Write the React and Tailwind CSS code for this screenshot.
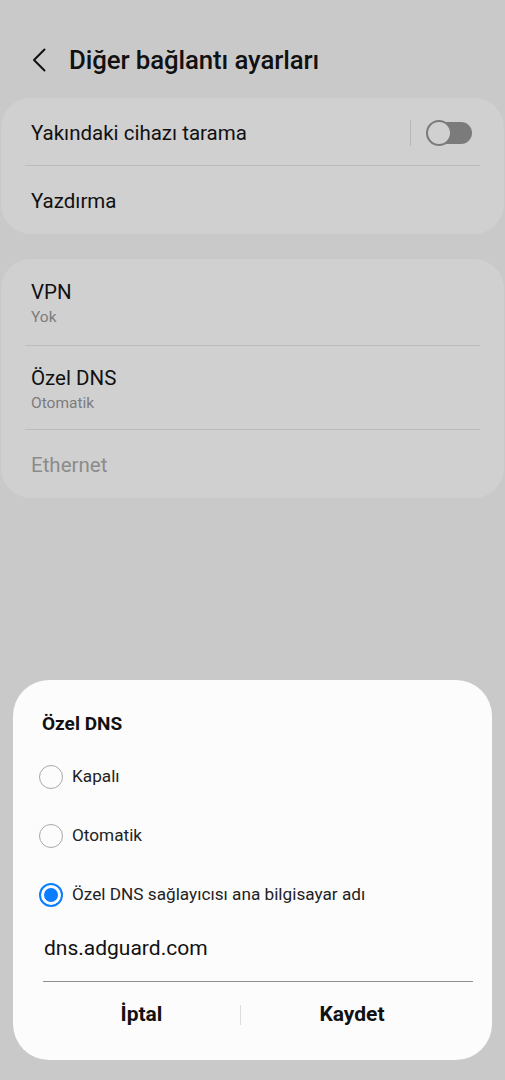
import React, { useState } from 'react';

const font = { fontFamily: 'Roboto, "Noto Sans", sans-serif' };

function Row({ title, sub, muted, children, divider, pad = 'pt-[20px] pb-[16px]' }) {
  return (
    <div className="px-[24px]">
      <div className={`flex items-center px-[6px] ${sub ? pad : 'h-[68px] pt-[2px]'} ${divider ? 'border-b border-[#bcbcbc]' : ''}`}>
        <div className="flex-1">
          <div className={`text-[20.5px] leading-[26px] ${muted ? 'text-[#8b8b8b]' : 'text-[#111]'}`}>{title}</div>
          {sub && <div className="text-[15.5px] leading-[24px] text-[#7c7c7c]">{sub}</div>}
        </div>
        {children}
      </div>
    </div>
  );
}

function Radio({ checked, label, onClick }) {
  return (
    <button onClick={onClick} className="h-[59px] w-full flex items-center gap-[9px] pl-[26px] text-left">
      {checked ? (
        <span className="w-[24px] h-[24px] rounded-full border-2 border-[#0a7efe] flex items-center justify-center">
          <span className="w-[14px] h-[14px] rounded-full bg-[#0a7efe]" />
        </span>
      ) : (
        <span className="w-[24px] h-[24px] rounded-full border-[1.5px] border-[#a8a8a8]" />
      )}
      <span className="text-[17.2px] text-[#222]">{label}</span>
    </button>
  );
}

export default function App() {
  const [mode, setMode] = useState('custom');

  return (
    <div className="w-[505px] h-[1080px] bg-[#c9c9c9] flex flex-col overflow-hidden" style={font}>
      <header className="mt-[40px] h-[40px] flex items-center">
        <svg width="14" height="24" viewBox="0 0 14 24" className="ml-[32px]" fill="none" stroke="#111" strokeWidth="2" strokeLinecap="round" strokeLinejoin="round">
          <path d="M12.5 1.5 L2 12 L12.5 22.5" />
        </svg>
        <h1 className="ml-[23px] text-[25.8px] font-medium text-[#111] tracking-[-0.1px]">Diğer bağlantı ayarları</h1>
      </header>

      <section className="mt-[18px] mx-[1px] bg-[#d0d0d0] rounded-[30px]">
        <Row title="Yakındaki cihazı tarama" divider>
          <div className="w-[1px] h-[26px] bg-[#b5b5b5] mr-[15px]" />
          <div className="relative w-[46px] h-[26px] mr-[2px] flex items-center">
            <div className="absolute right-0 w-[36px] h-[22px] rounded-full bg-[#7b7b7b]" />
            <div className="relative w-[26px] h-[26px] rounded-full bg-[#d0d0d0] border-2 border-[#7b7b7b]" />
          </div>
        </Row>
        <Row title="Yazdırma" />
      </section>

      <section className="mt-[25px] mx-[1px] bg-[#d0d0d0] rounded-[30px]">
        <Row title="VPN" sub="Yok" divider />
        <Row title="Özel DNS" sub="Otomatik" divider pad="pt-[19px] pb-[14px]" />
        <Row title="Ethernet" muted />
      </section>

      <div className="flex-1" />

      <div className="mx-[13px] mb-[20px] h-[380px] bg-[#fcfcfc] rounded-[36px] flex flex-col">
        <div className="pt-[32px] pl-[29px] text-[19px] leading-[24px] font-bold text-[#111]">Özel DNS</div>
        <div className="mt-[11px]">
          <Radio label="Kapalı" checked={mode === 'off'} onClick={() => setMode('off')} />
          <Radio label="Otomatik" checked={mode === 'auto'} onClick={() => setMode('auto')} />
          <Radio label="Özel DNS sağlayıcısı ana bilgisayar adı" checked={mode === 'custom'} onClick={() => setMode('custom')} />
        </div>
        <div className="ml-[30px] mr-[19px] mt-[10px]">
          <div className="pl-[1px] pb-[19px] border-b border-[#8f8f8f] text-[21px] leading-[28px] text-[#111]">dns.adguard.com</div>
          <div className="h-[62px] pt-[3px] flex items-center">
            <button className="w-[197px] text-[21px] font-bold text-[#111]">İptal</button>
            <div className="w-[1px] h-[20px] bg-[#dcdcdc]" />
            <button className="flex-1 pr-[10px] text-[21px] font-bold text-[#111]">Kaydet</button>
          </div>
        </div>
      </div>
    </div>
  );
}
